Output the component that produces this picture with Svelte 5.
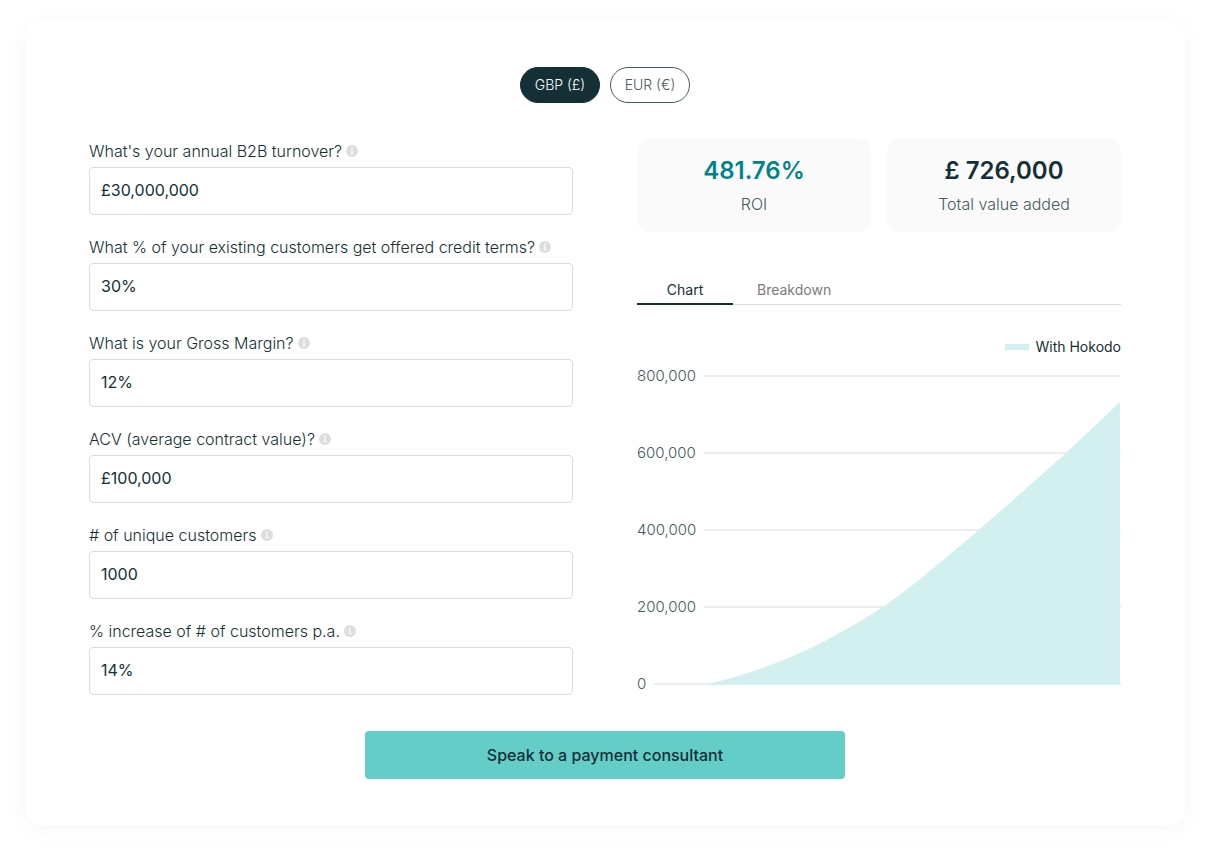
<script>
  const currencies = [
    { code: 'GBP', symbol: '£' },
    { code: 'EUR', symbol: '€' }
  ];
  const tabs = ['Chart', 'Breakdown'];
  const ticks = ['800,000', '600,000', '400,000', '200,000', '0'];

  let currency = $state('GBP');
  let activeTab = $state('Chart');

  let fields = $state([
    { id: 'turnover', label: "What's your annual B2B turnover?", value: '£30,000,000' },
    { id: 'credit', label: 'What % of your existing customers get offered credit terms?', value: '30%' },
    { id: 'margin', label: 'What is your Gross Margin?', value: '12%' },
    { id: 'acv', label: 'ACV (average contract value)?', value: '£100,000' },
    { id: 'customers', label: '# of unique customers', value: '1000' },
    { id: 'increase', label: '% increase of # of customers p.a.', value: '14%' }
  ]);
</script>

<main class="page">
  <section class="calculator">
    <div class="currencies">
      {#each currencies as item}
        <button
          type="button"
          class="pill"
          class:selected={currency === item.code}
          aria-pressed={currency === item.code}
          onclick={() => (currency = item.code)}
        >{item.code} ({item.symbol})</button>
      {/each}
    </div>

    <div class="columns">
      <form class="fields">
        {#each fields as field}
          <div class="field">
            <div class="field-label">
              <label for={field.id}>{field.label}</label>
              <svg class="info" viewBox="0 0 12 12" aria-hidden="true">
                <circle cx="6" cy="6" r="6" fill="#dedede" />
                <circle cx="6" cy="3.4" r="0.9" fill="#fff" />
                <path d="M4.7 5.2h1.9v3.1h.9v.9H4.6v-.9h.9V6.1h-.8z" fill="#fff" />
              </svg>
            </div>
            <input id={field.id} type="text" bind:value={field.value} />
          </div>
        {/each}
      </form>

      <div class="results">
        <div class="stats">
          <div class="stat">
            <strong class="roi">481.76%</strong>
            <span>ROI</span>
          </div>
          <div class="stat">
            <strong>£ 726,000</strong>
            <span>Total value added</span>
          </div>
        </div>

        <div class="tabs" role="tablist">
          {#each tabs as tab}
            <button
              type="button"
              role="tab"
              class="tab"
              class:active={activeTab === tab}
              aria-selected={activeTab === tab}
              onclick={() => (activeTab = tab)}
            >{tab}</button>
          {/each}
        </div>

        <div class="legend">
          <span class="swatch"></span>
          With Hokodo
        </div>

        <div class="chart">
          {#each ticks as tick}
            <div class="tick">
              <span>{tick}</span>
              <div class="line"></div>
            </div>
          {/each}
          <svg class="area" viewBox="0 0 416 309" preserveAspectRatio="none" aria-hidden="true">
            <path
              d="M0 308.5 C74 292 130 262 178 231 C220 202 295 136 361 77 L415 26 V309 H0 Z"
              fill="#d2f0ef"
            />
          </svg>
        </div>
      </div>
    </div>

    <button type="button" class="cta">Speak to a payment consultant</button>
  </section>
</main>

<style>
  :global(body) {
    margin: 0;
    background: #fff;
  }
  .page {
    padding: 21px 25px 29px;
    font-family: Inter, 'Liberation Sans', sans-serif;
    font-size: 16px;
    line-height: 24px;
    color: #152f36;
  }
  .page button,
  .page input {
    font-family: inherit;
    box-sizing: border-box;
  }
  .page button {
    cursor: pointer;
  }
  .calculator {
    display: flex;
    flex-direction: column;
    gap: 36px;
    padding: 46px 64px;
    border-radius: 16px;
    background: #fff;
    box-shadow: 0 4px 24px rgba(0, 0, 0, 0.04);
  }
  .currencies {
    display: flex;
    justify-content: center;
    gap: 10px;
  }
  .pill {
    min-width: 80px;
    height: 36px;
    padding: 0 12px 2px;
    border: 1px solid #455a60;
    border-radius: 18px;
    background: #fff;
    color: #455a60;
    font-size: 14px;
    font-weight: 300;
  }
  .pill.selected {
    border-color: #152f36;
    background: #152f36;
    color: #fff;
  }
  .columns {
    display: grid;
    grid-template-columns: 1fr 1fr;
    gap: 64px;
  }
  .fields {
    display: flex;
    flex-direction: column;
    gap: 20px;
  }
  .field {
    display: flex;
    flex-direction: column;
    gap: 4px;
  }
  .field-label {
    display: flex;
    align-items: center;
    gap: 4px;
    font-weight: 300;
  }
  .info {
    width: 12px;
    height: 12px;
    flex: none;
  }
  .field input {
    width: 100%;
    height: 48px;
    padding: 0 11px 2px;
    border: 1px solid #dcdcdc;
    border-radius: 4px;
    background: #fff;
    color: #152f36;
    font-size: 16px;
  }
  .stats {
    display: grid;
    grid-template-columns: 1fr 1fr;
    gap: 16px;
  }
  .stat {
    display: flex;
    flex-direction: column;
    align-items: center;
    gap: 6px;
    padding: 16px;
    border-radius: 12px;
    background: #fafafa;
    color: #455a60;
    font-weight: 300;
  }
  .stat strong {
    color: #152f36;
    font-size: 24px;
    font-weight: 600;
    line-height: 31px;
  }
  .stat .roi {
    color: #00848a;
  }
  .tabs {
    display: flex;
    margin-top: 48px;
    box-shadow: inset 0 -1px #dcdcdc;
  }
  .tab {
    min-width: 96px;
    padding: 0 24px 3px;
    border: 0;
    border-bottom: 2px solid transparent;
    background: none;
    color: #7b7b7b;
    font-size: 14px;
    line-height: 20px;
  }
  .tab.active {
    border-color: #152f36;
    color: #152f36;
  }
  .legend {
    display: flex;
    align-items: center;
    justify-content: flex-end;
    gap: 6px;
    margin-top: 32px;
    font-size: 14px;
    line-height: 20px;
  }
  .swatch {
    width: 24px;
    height: 6px;
    background: #d2f0ef;
  }
  .chart {
    position: relative;
    display: flex;
    flex-direction: column;
    gap: 57px;
    margin-top: 9px;
  }
  .tick {
    display: flex;
    align-items: center;
    gap: 8px;
    color: #455a60;
    font-size: 15px;
    font-weight: 300;
    line-height: 20px;
  }
  .line {
    flex: 1;
    height: 2px;
    background: #ededed;
  }
  /* the area starts at the top grid line and ends at the zero line */
  .area {
    position: absolute;
    top: 10px;
    left: 68px;
    width: calc(100% - 68px);
    height: calc(100% - 19px);
  }
  .cta {
    align-self: center;
    width: 480px;
    max-width: 100%;
    height: 48px;
    border: 0;
    border-radius: 4px;
    background: #64cdc8;
    color: #152f36;
    font-size: 16px;
    font-weight: 500;
  }
</style>
